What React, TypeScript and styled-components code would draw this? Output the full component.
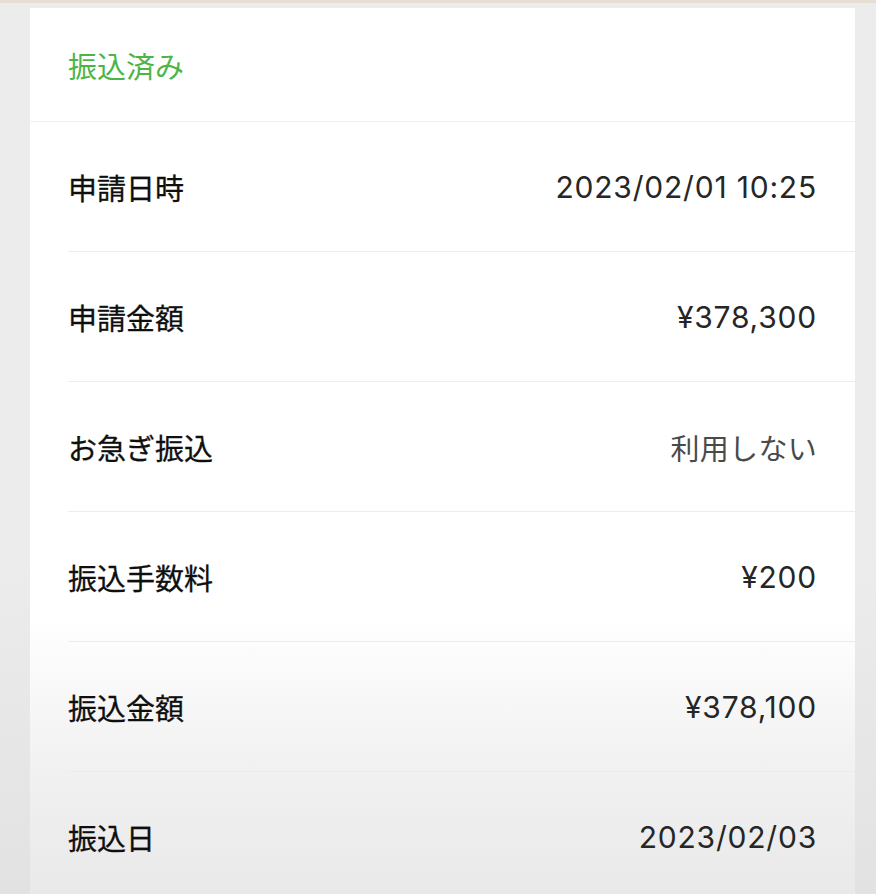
import React from "react";
import styled, { createGlobalStyle } from "styled-components";

const GlobalStyle = createGlobalStyle`
  html, body {
    margin: 0;
    padding: 0;
    background: #ebebeb;
  }
  body {
    font-family: Inter, "Noto Sans CJK JP", sans-serif;
  }
`;

const Page = styled.div`
  width: 876px;
  height: 894px;
  overflow: hidden;
  background: linear-gradient(to bottom, #ececec 0px, #ececec 560px, #e2e2e2 894px);
  display: flex;
  flex-direction: column;
`;

const TopStrip = styled.div`
  height: 3px;
  background: #e6ddd3;
  flex-shrink: 0;
`;

const Card = styled.div`
  margin: 5px 21px 0 30px;
  flex: 1;
  background: linear-gradient(to bottom, #ffffff 0px, #ffffff 610px, #f1f1f1 760px, #e9e9e9 886px);
  display: flex;
  flex-direction: column;
`;

const Header = styled.div`
  height: 113px;
  display: flex;
  align-items: center;
  padding-left: 38px;
  border-bottom: 1px solid #f0f0f0;
`;

const Status = styled.span`
  font-family: "Noto Sans CJK JP", sans-serif;
  font-size: 29px;
  color: #4db548;
`;

const Row = styled.div<{ $last?: boolean }>`
  height: 130px;
  margin-left: 38px;
  padding-right: 38px;
  display: flex;
  align-items: center;
  justify-content: space-between;
  border-bottom: ${(p) => (p.$last ? "none" : "1px solid #ececec")};
  box-sizing: border-box;
`;

const Label = styled.span`
  font-family: "Noto Sans CJK JP", sans-serif;
  font-size: 29px;
  font-weight: 400;
  color: #0f0f0f;
  -webkit-text-stroke: 0.3px #0f0f0f;
`;

const Value = styled.span<{ $muted?: boolean }>`
  font-family: Inter, "Noto Sans CJK JP", sans-serif;
  font-size: ${(p) => (p.$muted ? "29px" : "30px")};
  letter-spacing: ${(p) => (p.$muted ? "0.3px" : "0.8px")};
  color: ${(p) => (p.$muted ? "#4a4a4a" : "#262626")};
`;

const rows: { label: string; value: string; muted?: boolean }[] = [
  { label: "申請日時", value: "2023/02/01 10:25" },
  { label: "申請金額", value: "¥378,300" },
  { label: "お急ぎ振込", value: "利用しない", muted: true },
  { label: "振込手数料", value: "¥200" },
  { label: "振込金額", value: "¥378,100" },
  { label: "振込日", value: "2023/02/03" },
];

export default function App() {
  return (
    <>
      <GlobalStyle />
      <Page>
        <TopStrip />
        <Card>
          <Header>
            <Status>振込済み</Status>
          </Header>
          {rows.map((r, i) => (
            <Row key={r.label} $last={i === rows.length - 1}>
              <Label>{r.label}</Label>
              <Value $muted={r.muted}>{r.value}</Value>
            </Row>
          ))}
        </Card>
      </Page>
    </>
  );
}
